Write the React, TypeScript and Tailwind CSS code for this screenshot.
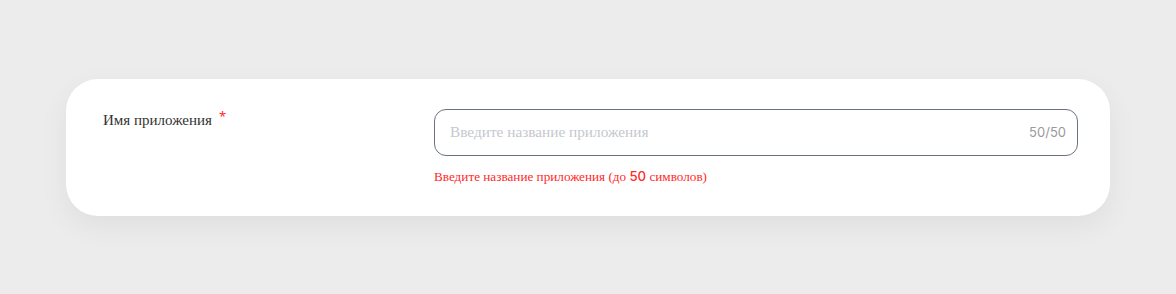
export default function App() {
    return (
        <div className="flex h-[294px] w-full items-start bg-[#ececec] pt-[79px]">
            <div className="ml-[66px] flex w-[1044px] rounded-[32px] bg-white pt-[30px] pr-[32px] pb-[30px] pl-[37px] shadow-[0_10px_30px_rgba(0,0,0,0.06)]">
                {/* Label */}
                <div className="-mt-[2px] w-[331px] shrink-0">
                    <span
                        className="text-[15px] text-[#333]"
                        style={{ fontFamily: '"Liberation Serif", serif' }}
                    >
                        Имя приложения
                    </span>
                    <span className="relative -top-[4px] ml-[7px] text-[13px] text-[#ff2a2a]">*</span>
                </div>

                {/* Input */}
                <div className="flex-1">
                    <div className="flex h-[47px] items-center justify-between rounded-[12px] border-[1.5px] border-[#6b7280] pr-[11px] pl-[15px]">
                        <span
                            className="text-[15.3px] text-[#c4c8ce]"
                            style={{ fontFamily: '"Liberation Serif", serif' }}
                        >
                            Введите название приложения
                        </span>
                        <span
                            className="text-[13px] text-[#9a9a9a]"
                            style={{ fontFamily: 'Inter, sans-serif' }}
                        >
                            50/50
                        </span>
                    </div>
                    <p
                        className="mt-[11px] text-[13.2px] leading-[18px] text-[#ff2a2a]"
                        style={{ fontFamily: '"Liberation Serif", serif' }}
                    >
                        Введите название приложения (до{" "}
                        <span className="font-medium" style={{ fontFamily: 'Inter, sans-serif' }}>50</span> символов)
                    </p>
                </div>
            </div>
        </div>
    );
}
